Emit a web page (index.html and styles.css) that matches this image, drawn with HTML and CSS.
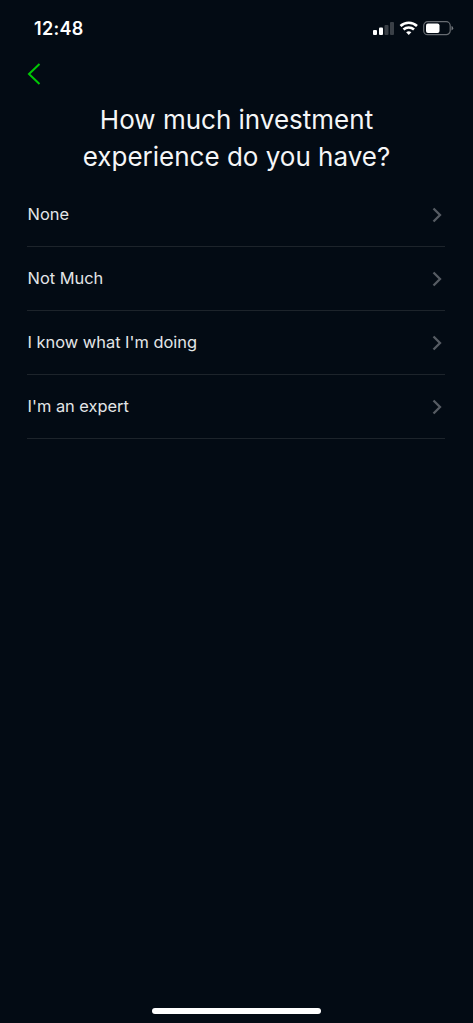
FILE: index.html
```html
<!DOCTYPE html>
<html lang="en">
<head>
<meta charset="utf-8">
<title>Investment experience</title>
<link rel="stylesheet" href="styles.css">
</head>
<body>
<div class="screen">
  <header class="status">
    <span class="time">12:48</span>
    <svg class="status-icons" width="82" height="16" viewBox="0 0 82 16">
      <g fill="#fff">
        <rect x="1" y="10" width="4" height="5" rx="1"/>
        <rect x="7" y="7.500" width="4" height="7.500" rx="1"/>
        <rect x="12.500" y="5" width="4" height="10" rx="1" opacity=".22"/>
        <rect x="18" y="2" width="4" height="13" rx="1" opacity=".22"/>
      </g>
      <g fill="none" stroke="#fff" stroke-width="2.600">
        <path d="M28.500 6a12 12 0 0 1 16.500 0"/>
        <path d="M31.500 9.500a7.800 7.800 0 0 1 10.500 0"/>
      </g>
      <path d="M36.750 15l-2.600-2.700a4 4 0 0 1 5.200 0z" fill="#fff"/>
      <rect x="51.700" y="1.700" width="26.500" height="13" rx="4" fill="none" stroke="#fff" stroke-width="1.200" stroke-opacity=".4"/>
      <rect x="54" y="3.500" width="13.500" height="9.500" rx="2" fill="#fff"/>
      <path d="M79.500 6q1.700.6 1.700 2.200t-1.700 2.200z" fill="#fff" opacity=".45"/>
    </svg>
  </header>
  <nav class="nav">
    <svg width="14" height="22" viewBox="0 0 14 22"><path d="M12.500 1L2 11l10.500 10" fill="none" stroke="#00c805" stroke-width="2"/></svg>
  </nav>
  <h1 class="title">How much investment<br>experience do you have?</h1>
  <ul class="options">
    <li class="option"><span class="label">None</span><svg class="chevron" viewBox="0 0 10 16"><path d="M1.500 1.500L8 8l-6.500 6.500"/></svg></li>
    <li class="option"><span class="label">Not Much</span><svg class="chevron" viewBox="0 0 10 16"><path d="M1.500 1.500L8 8l-6.500 6.500"/></svg></li>
    <li class="option"><span class="label">I know what I'm doing</span><svg class="chevron" viewBox="0 0 10 16"><path d="M1.500 1.500L8 8l-6.500 6.500"/></svg></li>
    <li class="option"><span class="label">I'm an expert</span><svg class="chevron" viewBox="0 0 10 16"><path d="M1.500 1.500L8 8l-6.500 6.500"/></svg></li>
  </ul>
  <div class="home"></div>
</div>
</body>
</html>
```
FILE: styles.css
```css
* { box-sizing: border-box; }
body { margin: 0; background: #030b14; color: #fff; font-family: Inter, sans-serif; }
.screen { height: 1023px; display: flex; flex-direction: column; }
.status { height: 56px; padding: 0 19px 0 34px; display: flex; align-items: center; justify-content: space-between; }
.time { font-size: 18px; font-weight: 600; letter-spacing: .3px; }
.nav { height: 36px; padding: 7px 0 0 27px; }
.nav svg { display: block; }
.title { margin: 9px 0 0; font-size: 26px; line-height: 37px; font-weight: 400; text-align: center; color: #f5f6f7; }
.options { list-style: none; margin: 8px 28px 0 27px; padding: 0; }
.option { height: 64px; border-bottom: 1px solid #1d242b; display: flex; align-items: center; justify-content: space-between; }
.label { padding: 0 0 2px .6px; font-size: 16.4px; color: #e4e6e8; }
.chevron { width: 10px; height: 16px; margin-right: 3px; fill: none; stroke: #565c63; stroke-width: 2.3; }
.home { width: 169px; height: 6px; margin: auto auto 9px; border-radius: 3px; background: #fff; }
```
